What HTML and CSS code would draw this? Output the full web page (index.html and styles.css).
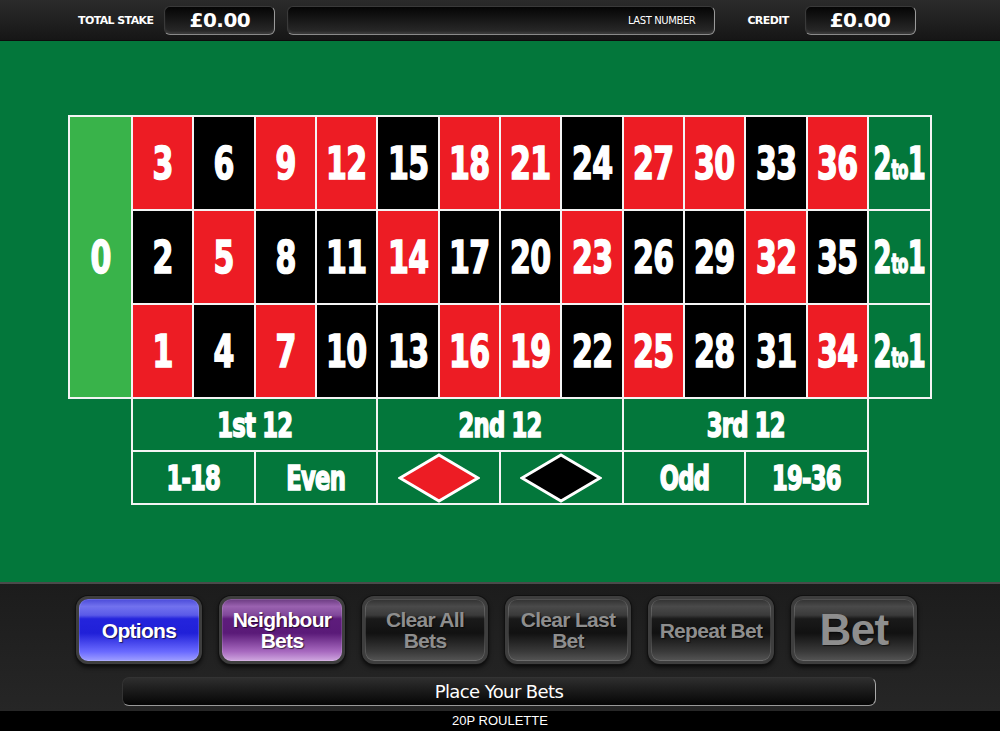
FILE: index.html
```html
<!DOCTYPE html>
<html>
<head>
    <title>20P Roulette</title>
    <link rel="stylesheet" href="styles.css">
</head>
<body>
    <div class="topbar">
        <span class="label stake-label">TOTAL STAKE</span>
        <div class="box money">£0.00</div>
        <div class="box last"><span>LAST NUMBER</span></div>
        <span class="label credit-label">CREDIT</span>
        <div class="box money">£0.00</div>
    </div>

    <div class="felt">
        <div class="board">
            <div class="grid">
                <div class="cell zero"><span>0</span></div>
                <div class="cell red"><span>3</span></div><div class="cell black"><span>6</span></div><div class="cell red"><span>9</span></div><div class="cell red"><span>12</span></div>
                <div class="cell black"><span>15</span></div><div class="cell red"><span>18</span></div><div class="cell red"><span>21</span></div><div class="cell black"><span>24</span></div>
                <div class="cell red"><span>27</span></div><div class="cell red"><span>30</span></div><div class="cell black"><span>33</span></div><div class="cell red"><span>36</span></div>
                <div class="cell col"><span>2<small>to</small>1</span></div>

                <div class="cell black"><span>2</span></div><div class="cell red"><span>5</span></div><div class="cell black"><span>8</span></div><div class="cell black"><span>11</span></div>
                <div class="cell red"><span>14</span></div><div class="cell black"><span>17</span></div><div class="cell black"><span>20</span></div><div class="cell red"><span>23</span></div>
                <div class="cell black"><span>26</span></div><div class="cell black"><span>29</span></div><div class="cell red"><span>32</span></div><div class="cell black"><span>35</span></div>
                <div class="cell col"><span>2<small>to</small>1</span></div>

                <div class="cell red"><span>1</span></div><div class="cell black"><span>4</span></div><div class="cell red"><span>7</span></div><div class="cell black"><span>10</span></div>
                <div class="cell black"><span>13</span></div><div class="cell red"><span>16</span></div><div class="cell red"><span>19</span></div><div class="cell black"><span>22</span></div>
                <div class="cell red"><span>25</span></div><div class="cell black"><span>28</span></div><div class="cell black"><span>31</span></div><div class="cell red"><span>34</span></div>
                <div class="cell col"><span>2<small>to</small>1</span></div>
            </div>
            <div class="outside">
                <div class="cell dozen"><span>1st 12</span></div>
                <div class="cell dozen"><span>2nd 12</span></div>
                <div class="cell dozen"><span>3rd 12</span></div>
                <div class="cell even"><span>1-18</span></div>
                <div class="cell even"><span>Even</span></div>
                <div class="cell even">
                    <svg width="82" height="50" viewBox="0 0 82 50"><polygon points="41,2 80,25 41,48 2,25" fill="#ed1c24" stroke="#fff" stroke-width="3"/></svg>
                </div>
                <div class="cell even">
                    <svg width="82" height="50" viewBox="0 0 82 50"><polygon points="41,2 80,25 41,48 2,25" fill="#000" stroke="#fff" stroke-width="3"/></svg>
                </div>
                <div class="cell even"><span>Odd</span></div>
                <div class="cell even"><span>19-36</span></div>
            </div>
        </div>
    </div>

    <div class="panel">
        <div class="buttons">
            <button class="btn blue">Options</button>
            <button class="btn purple">Neighbour<br>Bets</button>
            <button class="btn grey">Clear All<br>Bets</button>
            <button class="btn grey">Clear Last<br>Bet</button>
            <button class="btn grey">Repeat Bet</button>
            <button class="btn grey big">Bet</button>
        </div>
        <div class="status">Place Your Bets</div>
    </div>

    <div class="footer">20P ROULETTE</div>
</body>
</html>
```

FILE: styles.css
```css
body {
    margin: 0;
    width: 1000px;
    height: 731px;
    overflow: hidden;
    background: #000;
    font-family: "DejaVu Sans", sans-serif;
    color: #fff;
}

/* top bar */
.topbar {
    height: 40px;
    display: flex;
    align-items: center;
    background: linear-gradient(#2b2b2b, #161616);
    border-bottom: 1px solid #0c0c0c;
}

.label {
    font-size: 11px;
    font-weight: bold;
    letter-spacing: -0.6px;
}

.stake-label {
    margin-left: 78px;
    margin-right: 11px;
}

.credit-label {
    margin-left: 32px;
    margin-right: 16px;
}

.box {
    height: 27px;
    border-radius: 6px;
    background: linear-gradient(#050505, #2c2c2c);
    border: 1px solid #3a3a3a;
    border-right-color: #9a9a9a;
    border-bottom-color: #8a8a8a;
    box-shadow: inset 0 -2px 2px rgba(255, 255, 255, 0.08);
    display: flex;
    align-items: center;
}

.money {
    width: 109px;
    justify-content: center;
    font-size: 20px;
    font-weight: bold;
    letter-spacing: -0.5px;
}

.last {
    width: 426px;
    margin-left: 12px;
    justify-content: flex-end;
    font-size: 10px;
    letter-spacing: -0.4px;
}

.last span {
    margin-right: 19px;
}

/* felt */
.felt {
    height: 541px;
    background: #03773b;
    padding-top: 74px;
    box-sizing: border-box;
}

.board {
    width: 864px;
    margin: 0 auto;
}

.grid {
    display: grid;
    grid-template-columns: 61px repeat(12, 1fr) 61px;
    grid-template-rows: repeat(3, 92px);
    gap: 2px;
    padding: 2px;
    background: #f4f4f4;
}

.cell {
    display: flex;
    align-items: center;
    justify-content: center;
    font-family: "DejaVu Sans Condensed", "DejaVu Sans", sans-serif;
    font-weight: bold;
    font-size: 45px;
    letter-spacing: -1px;
}

/* the board lettering is a tall narrow heavy face */
.cell span {
    display: inline-block;
    transform: scaleX(0.74);
    white-space: nowrap;
    -webkit-text-stroke: 1.6px currentColor;
}

.red {
    background: #ed1c24;
}

.black {
    background: #000;
}

.zero {
    grid-row: 1 / 4;
    background: #39b34a;
}

.col {
    background: #03773b;
}

.col span {
    transform: scaleX(0.64);
}

.col small {
    font-size: 26px;
    margin-left: 1px;
}

.outside {
    margin-left: 63px;
    width: 738px;
    box-sizing: border-box;
    display: grid;
    grid-template-columns: repeat(6, 1fr);
    grid-template-rows: 51px 51px;
    gap: 2px;
    padding: 0 2px 2px;
    background: #f4f4f4;
}

.outside .cell {
    background: #03773b;
    font-size: 34px;
}

.dozen {
    grid-column: span 2;
}

/* bottom panel */
.panel {
    height: 129px;
    box-sizing: border-box;
    border-top: 2px solid #4a4a4a;
    background: linear-gradient(#1c1c1c, #262626);
    padding-top: 12px;
}

.buttons {
    display: flex;
    gap: 17px;
    padding-left: 76px;
}

.btn {
    width: 126px;
    height: 68px;
    border-radius: 12px;
    border: 3px solid #3e3e3e;
    box-shadow: 0 0 0 1px #111, 0 3px 5px rgba(0, 0, 0, 0.8), inset 0 0 0 1px rgba(255, 255, 255, 0.15);
    font-family: "Liberation Sans", Arial, sans-serif;
    font-weight: bold;
    font-size: 21px;
    line-height: 21px;
    letter-spacing: -0.7px;
    text-shadow: 1px 1px 1px rgba(0, 0, 0, 0.6);
    padding: 0;
}

.blue {
    color: #fff;
    background: linear-gradient(#4a4ad8 0%, #7272ee 12%, #5a5ae8 26%, #2424dc 32%, #2020d8 55%, #6a6aff 85%, #a0a0ff 100%);
}

.purple {
    color: #fff;
    background: linear-gradient(#6a3a80 0%, #9a62b0 12%, #80489a 26%, #5e1c7c 32%, #5a1a78 55%, #a86ac0 85%, #d0a8e0 100%);
}

.grey {
    color: #8e8e8e;
    background: linear-gradient(#303030 0%, #4a4a4a 12%, #3a3a3a 26%, #1a1a1a 32%, #111 55%, #3a3a3a 85%, #555 100%);
}

.big {
    font-size: 44px;
    line-height: 42px;
}

.status {
    margin: 13px 0 0 122px;
    width: 754px;
    height: 29px;
    box-sizing: border-box;
    border-radius: 7px;
    background: linear-gradient(#2e2e2e, #050505);
    border: 1px solid #333;
    border-right-color: #aaa;
    border-bottom-color: #999;
    display: flex;
    align-items: center;
    justify-content: center;
    font-size: 18px;
    letter-spacing: -0.6px;
}

.footer {
    height: 19px;
    background: #000;
    text-align: center;
    font-family: "Liberation Sans", Arial, sans-serif;
    font-size: 13px;
    line-height: 19px;
}
```
